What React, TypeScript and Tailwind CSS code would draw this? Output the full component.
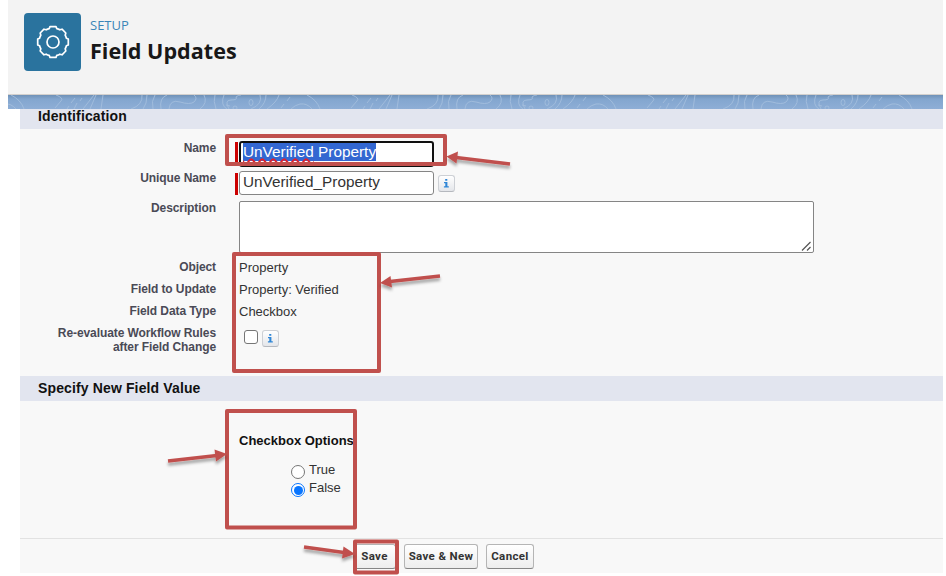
import type { ReactNode } from "react";

const sans = "font-['Liberation_Sans',Arial,sans-serif]";

function Info() {
  return (
    <span className="flex h-[17px] w-[17px] shrink-0 items-center justify-center rounded-[3px] border border-[#cdd0d5] border-b-[#b5b8be] bg-gradient-to-b from-white to-[#e4e6ea]">
      <svg width="7" height="9" viewBox="0 0 7 9" fill="#2f86d6">
        <path d="M2.2 0h2.1v1.7H2.2zM1 3h3.4v4.3h1.4v1.2H.9V7.3h1.4V4.2H1z" />
      </svg>
    </span>
  );
}

function Row({ label, height, children }: { label: ReactNode; height: string; children: ReactNode }) {
  return (
    <div className={`flex shrink-0 ${height}`}>
      <div className="mr-[19px] w-[196px] shrink-0 text-right text-[12px] leading-[14px] font-bold tracking-[-0.09px] text-[#4a4a56]">
        {label}
      </div>
      <div className="flex items-start">{children}</div>
    </div>
  );
}

function Button({ width, children }: { width: string; children: ReactNode }) {
  return (
    <button
      className={`h-[25px] ${width} rounded-[3px] border border-[#b5b5b5] border-b-[#858585] bg-gradient-to-b from-white to-[#ededed] pt-px font-[Roboto,sans-serif] text-[11.500px] leading-none font-bold tracking-[0.35px] whitespace-nowrap text-[#333]`}
    >
      {children}
    </button>
  );
}

function Contours() {
  return (
    <svg width="935" height="14" className="block shrink-0">
      <defs>
        <linearGradient id="band" x1="0" y1="0" x2="0" y2="1">
          <stop offset="0" stopColor="#6f91b7" />
          <stop offset=".3" stopColor="#83a6cf" />
          <stop offset="1" stopColor="#8eaed6" />
        </linearGradient>
        <pattern id="lines" x="292" y="0" width="296" height="14" patternUnits="userSpaceOnUse">
          <g fill="none" stroke="#a3bddd" strokeWidth=".9">
            <path d="M0 9Q7 8 12 14M7 0Q17 5 20 14M52 0Q60 3 57 6L51 13M71 3l-4 5M78 3l-2 3M65 11l-2 3M73 8l-3 6M90 0L79 14M92 0L86 14M99 0L97 14" />
            <path d="M138 0Q139 10 127 14M143 0Q143 9 139 14M151 0Q147 6 149 14M157 14Q155 3 163 0M165 14Q166 4 176 7T190 7Q194 3 190 0M200 0Q204 8 196 14M211 0Q209 6 212 14" />
            <path d="M220 0Q216 10 223 14M225 14Q220 5 227 5T232 2Q234 0 237 0M222 10l4 1M256 0Q259 9 247 14M262 0Q262 8 255 14M275 0Q273 7 263 14M286 2l-3 4M280 9l-3 4M287 14Q291 10 296 9" />
            <ellipse cx="247" cy="7.5" rx="2" ry="3" />
            <ellipse cx="231" cy="13" rx="2" ry="2" />
          </g>
        </pattern>
      </defs>
      <rect width="935" height="14" fill="url(#band)" />
      <rect width="935" height="14" fill="url(#lines)" />
    </svg>
  );
}

function Annotations() {
  return (
    <svg className="pointer-events-none absolute top-0 left-0" width="946" height="576">
      <defs>
        <filter id="shade" x="-30%" y="-80%" width="160%" height="300%">
          <feDropShadow dx="0" dy="3" stdDeviation="1.5" floodColor="#000" floodOpacity=".35" />
        </filter>
      </defs>
      <g fill="none" stroke="#c0504d" strokeWidth="4" strokeLinejoin="round">
        <rect x="227" y="136" width="218" height="28" />
        <rect x="234" y="254" width="145" height="117" />
        <rect x="227" y="411" width="128" height="116.5" />
        <rect x="355" y="541.5" width="42" height="31" />
      </g>
      <g stroke="#c0504d" strokeWidth="3.7" fill="#c0504d" filter="url(#shade)">
        <path d="M510 164L456 157.5" />
        <path d="M446.500 156.500L458 151.500L456.500 163.500Z" stroke="none" />
        <path d="M440 276L390 281.500" />
        <path d="M380 283L390.500 276L392 287.500Z" stroke="none" />
        <path d="M168 461L217 455.500" />
        <path d="M227 454L214.500 449.500L216 461.500Z" stroke="none" />
        <path d="M304 547L344 552.500" />
        <path d="M355 554L343.500 546.500L342 558.500Z" stroke="none" />
      </g>
    </svg>
  );
}

export default function App() {
  return (
    <div className={`relative h-[576px] w-[946px] overflow-hidden bg-white pr-[3px] pl-2 ${sans}`}>
      <header className="flex h-[95px] border-b border-[#d3d0cd] bg-[#f3f3f3] pt-[13px] pl-4">
        <div className="flex h-[58px] w-[57px] items-center justify-center rounded-[4px] bg-[#2a739e]">
          <svg width="34" height="34" viewBox="0 0 34 34" fill="none" stroke="white" strokeWidth="1.7" strokeLinejoin="round">
            <path d="M13.200 3.600L14 1.700H20L20.800 3.600Q22.500 4 23.800 4.800L26 4.200L29.800 8L29.200 10.200Q30 11.500 30.400 13.200L32.300 14V20L30.400 20.800Q30 22.500 29.200 23.800L29.800 26L26 29.800L23.800 29.200Q22.500 30 20.800 30.400L20 32.300H14L13.200 30.400Q11.500 30 10.200 29.200L8 29.800L4.200 26L4.800 23.800Q4 22.500 3.600 20.800L1.700 20V14L3.600 13.200Q4 11.500 4.800 10.200L4.200 8L8 4.200L10.200 4.800Q11.500 4 13.200 3.600Z" />
            <circle cx="17" cy="17" r="6" />
          </svg>
        </div>
        <div className="flex flex-col pt-[3px] pl-[9px] font-['Open_Sans','Noto_Sans',sans-serif]">
          <span className="text-[13px] leading-[19px] text-[#3b86b8]">SETUP</span>
          <h1 className="text-[21.600px] leading-[31px] font-bold whitespace-nowrap text-[#181818]">Field Updates</h1>
        </div>
      </header>
      <Contours />
      <main className="ml-3 flex h-[464px] flex-col bg-[#f8f8f8]">
        <h2 className="h-5 shrink-0 bg-[#e2e5ef] pl-[18px] text-[14px] leading-[14px] font-bold tracking-[0.13px] text-[#111]">Identification</h2>
        <div className="h-3 shrink-0" />
        <Row height="h-[30px]" label="Name">
          <div className="mt-[1px] h-[23px] w-[3px] bg-[#c00]" />
          <div className="ml-[1px] flex h-[26px] w-[195px] items-start overflow-hidden rounded-[3px] border-2 border-[#101010] bg-white pl-[2px]">
            <span className="bg-[#3367d1] text-[15.350px] leading-[18px] text-white">
              <span className="underline decoration-[#e0202c] decoration-wavy decoration-[1.500px] underline-offset-[1px] [text-decoration-skip-ink:none]">UnVerified</span> Property
            </span>
          </div>
        </Row>
        <Row height="h-[30px]" label="Unique Name">
          <div className="mt-[2px] h-[22px] w-[3px] bg-[#c00]" />
          <div className="ml-[1px] h-[24px] w-[195px] rounded-[3px] border border-[#858585] bg-white pl-[3px] text-[15.300px] leading-[20px] text-[#333]">UnVerified_Property</div>
          <div className="mt-1 ml-1"><Info /></div>
        </Row>
        <Row height="h-[60px]" label="Description">
          <div className="ml-1 flex h-[52px] w-[575px] items-end justify-end rounded-[2px] border border-[#858585] bg-white">
            <svg width="12" height="11" fill="none" stroke="#555" strokeWidth="1.200"><path d="M1 9.500L9.500 1M6 9.500L9.500 6" /></svg>
          </div>
        </Row>
        <div className="-mt-px flex flex-col text-[13px] leading-[15px] text-[#333]">
          <Row height="h-[22px]" label="Object"><span className="ml-1">Property</span></Row>
          <Row height="h-[22px]" label="Field to Update"><span className="ml-1">Property: Verified</span></Row>
          <Row height="h-[22px]" label="Field Data Type"><span className="ml-1">Checkbox</span></Row>
          <Row height="h-[50px]" label={<>Re-evaluate Workflow Rules<br />after Field Change</>}>
            <span className="mt-[4px] ml-[9px] h-[14px] w-[14px] rounded-[3px] border border-[#767676] bg-white" />
            <span className="mt-[4px] ml-1"><Info /></span>
          </Row>
        </div>
        <h2 className="h-[25px] shrink-0 bg-[#e2e5ef] pl-[18px] text-[14px] leading-[24px] font-bold tracking-[0.13px] text-[#111]">Specify New Field Value</h2>
        <section className="h-[138px] shrink-0 border-b border-[#e2e2e2] pt-[32px] pl-[219px]">
          <h3 className="text-[13px] leading-4 font-bold text-[#111]">Checkbox Options</h3>
          <div className="mt-[13px] ml-[52px] text-[13px] leading-[15px] text-[#333]">
            <div className="flex h-[18px] gap-1">
              <span className="mt-[3px] h-[14px] w-[14px] rounded-full border border-[#767676] bg-white" />True
            </div>
            <div className="flex h-[18px] gap-1">
              <span className="mt-[3px] flex h-[14px] w-[14px] items-center justify-center rounded-full border-[1.500px] border-[#0875ff] bg-white">
                <span className="h-[9px] w-[9px] rounded-full bg-[#0875ff]" />
              </span>
              False
            </div>
          </div>
        </section>
        <footer className="flex gap-[8px] pt-[5px] pl-[333px]">
          <Button width="w-[43px]">Save</Button>
          <Button width="w-[74px]">Save &amp; New</Button>
          <Button width="w-[48px]">Cancel</Button>
        </footer>
      </main>
      <Annotations />
    </div>
  );
}
